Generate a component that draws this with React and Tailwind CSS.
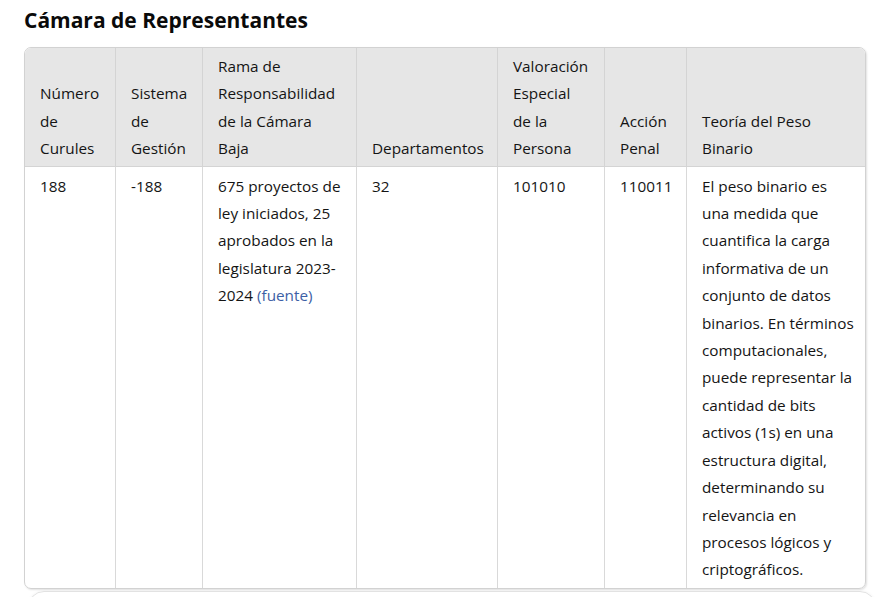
import React from "react";

const headers = [
  ["Número", "de", "Curules"],
  ["Sistema", "de", "Gestión"],
  ["Rama de", "Responsabilidad", "de la Cámara", "Baja"],
  ["Departamentos"],
  ["Valoración", "Especial", "de la", "Persona"],
  ["Acción", "Penal"],
  ["Teoría del Peso", "Binario"],
];

const widths = ["w-[91px]", "w-[87px]", "w-[154px]", "w-[141px]", "w-[107px]", "w-[82px]", "w-[178px]"];

const teoria = [
  "El peso binario es",
  "una medida que",
  "cuantifica la carga",
  "informativa de un",
  "conjunto de datos",
  "binarios. En términos",
  "computacionales,",
  "puede representar la",
  "cantidad de bits",
  "activos (1s) en una",
  "estructura digital,",
  "determinando su",
  "relevancia en",
  "procesos lógicos y",
  "criptográficos.",
];

function Lines({ lines }) {
  return lines.map((l, i) => (
    <span key={i} className="block whitespace-nowrap">{l}</span>
  ));
}

export default function App() {
  const body = [
    <Lines lines={["188"]} />,
    <Lines lines={["-188"]} />,
    <>
      <Lines lines={["675 proyectos de", "ley iniciados, 25", "aprobados en la", "legislatura 2023-"]} />
      <span className="block whitespace-nowrap">
        2024 <a href="#" className="text-[#3d5fa6]">(fuente)</a>
      </span>
    </>,
    <Lines lines={["32"]} />,
    <Lines lines={["101010"]} />,
    <Lines lines={["110011"]} />,
    <Lines lines={teoria} />,
  ];

  return (
    <div className="w-[883px] h-[597px] overflow-hidden bg-white text-[#141414] px-[24px]" style={{ fontFamily: '"Open Sans", "Noto Sans", sans-serif' }}>
      <h2 className="pt-[6px] mb-[13px] text-[21px] leading-[28px] font-bold text-[#0a0a0a]">Cámara de Representantes</h2>

      <div className="w-[842px] rounded-[7px] border border-[#d2d2d2] overflow-hidden shadow-[1px_1px_2px_rgba(0,0,0,0.12)]">
        <table className="w-[840px] table-fixed border-separate border-spacing-0 text-[15.3px] leading-[27.4px]">
          <colgroup>
            {widths.map((w, i) => <col key={i} className={w} />)}
          </colgroup>
          <thead>
            <tr className="bg-[#e6e6e6]">
              {headers.map((h, i) => (
                <th key={i} className={`${widths[i]} align-bottom text-left font-normal px-[15px] pt-[5px] pb-[3px] border-b border-[#d4d4d4] ${i < 6 ? "border-r" : ""}`}>
                  <Lines lines={h} />
                </th>
              ))}
            </tr>
          </thead>
          <tbody>
            <tr>
              {body.map((c, i) => (
                <td key={i} className={`${widths[i]} align-top px-[15px] pt-[6px] pb-[4px] border-[#d9d9d9] ${i < 6 ? "border-r" : ""}`}>
                  {c}
                </td>
              ))}
            </tr>
          </tbody>
        </table>
      </div>

      <div className="mt-[2px] ml-[4px] w-[848px] h-[40px] rounded-[16px] border border-[#e2e2e2] shadow-[0_0_3px_rgba(0,0,0,0.06)]"></div>
    </div>
  );
}
